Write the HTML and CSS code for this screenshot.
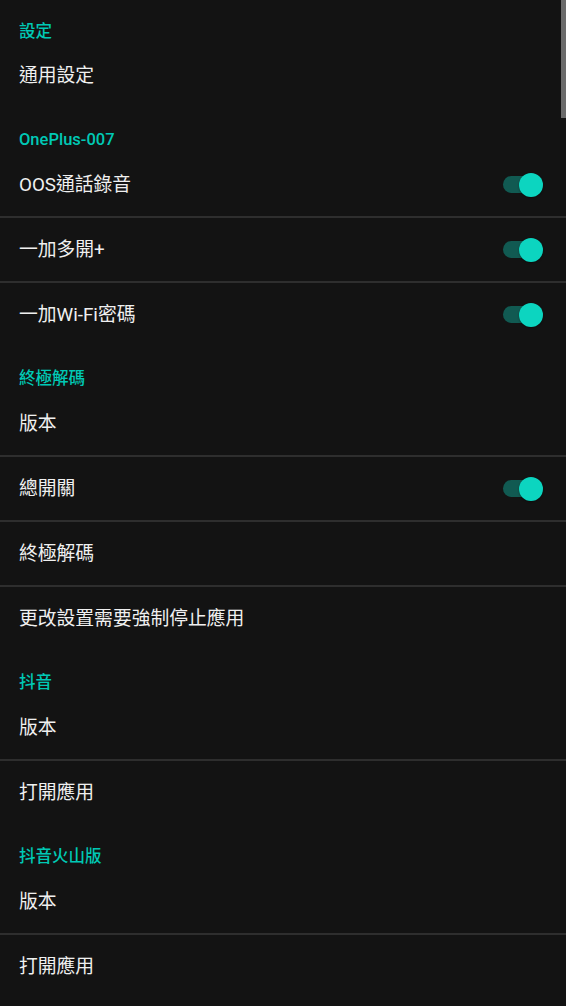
FILE: index.html
```html
<!DOCTYPE html>
<html lang="zh-Hant">
<head>
<meta charset="utf-8">
<title>設定</title>
<link rel="stylesheet" href="styles.css">
</head>
<body>
<div class="list">
  <section class="group">
    <div class="header">設定</div>
    <div class="item"><span class="label">通用設定</span></div>
  </section>
  <section class="group">
    <div class="header">OnePlus-007</div>
    <div class="item"><span class="label">OOS通話錄音</span><span class="toggle"><span class="track"></span><span class="thumb"></span></span></div>
    <div class="item"><span class="label">一加多開+</span><span class="toggle"><span class="track"></span><span class="thumb"></span></span></div>
    <div class="item"><span class="label">一加Wi-Fi密碼</span><span class="toggle"><span class="track"></span><span class="thumb"></span></span></div>
  </section>
  <section class="group">
    <div class="header">終極解碼</div>
    <div class="item"><span class="label">版本</span></div>
    <div class="item"><span class="label">總開關</span><span class="toggle"><span class="track"></span><span class="thumb"></span></span></div>
    <div class="item"><span class="label">終極解碼</span></div>
    <div class="item"><span class="label">更改設置需要強制停止應用</span></div>
  </section>
  <section class="group">
    <div class="header">抖音</div>
    <div class="item"><span class="label">版本</span></div>
    <div class="item"><span class="label">打開應用</span></div>
  </section>
  <section class="group">
    <div class="header">抖音火山版</div>
    <div class="item"><span class="label">版本</span></div>
    <div class="item"><span class="label">打開應用</span></div>
  </section>
</div>
<div class="scrollbar"></div>
</body>
</html>
```

FILE: styles.css
```css
html, body {
  margin: 0;
  padding: 0;
  background: #131313;
  overflow: hidden;
}

body {
  font-family: Roboto, "Noto Sans CJK TC", "Noto Sans", sans-serif;
  color: #efefef;
}

.list {
  display: flex;
  flex-direction: column;
  margin-top: -2px;
}

.group {
  display: flex;
  flex-direction: column;
}

.header {
  height: 46px;
  box-sizing: border-box;
  padding: 24px 19px 0 19px;
  font-size: 16.5px;
  line-height: 17px;
  font-weight: 500;
  color: #00c9b5;
}

.group:first-child .header {
  padding-top: 25px;
}

.item {
  height: 63px;
  box-sizing: border-box;
  display: flex;
  align-items: center;
  justify-content: space-between;
  padding: 0 23px 0 19px;
}

.item + .item {
  height: 65px;
  border-top: 2px solid #2e2e2e;
}

.label {
  font-size: 18.8px;
  line-height: 22px;
  color: #f0f0f0;
}

.toggle {
  position: relative;
  width: 40px;
  height: 24px;
  display: flex;
  align-items: center;
}

.track {
  width: 34px;
  height: 17px;
  border-radius: 9px;
  background: #115a52;
}

.thumb {
  position: absolute;
  right: 0;
  top: 0;
  width: 24px;
  height: 24px;
  border-radius: 50%;
  background: #0cd5c0;
  box-shadow: 0 1px 2px rgba(0, 0, 0, 0.35);
}

.scrollbar {
  position: fixed;
  top: 0;
  right: 0;
  width: 5px;
  height: 118px;
  background: #6b6b6b;
}
```
